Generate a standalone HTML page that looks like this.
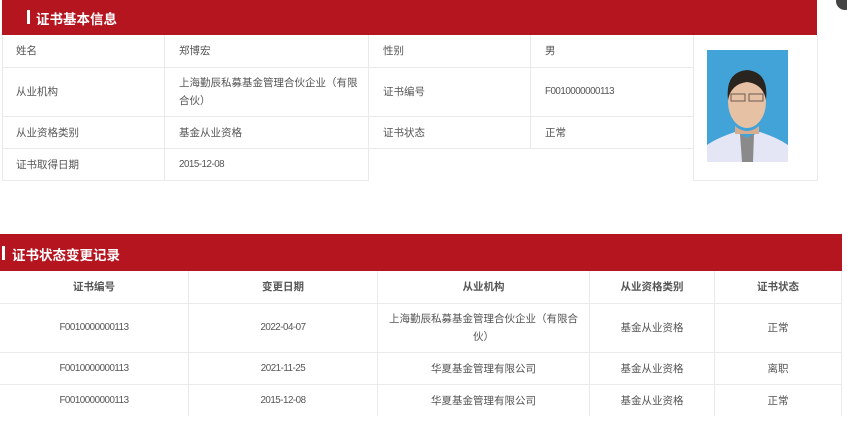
<!DOCTYPE html>
<html><head><meta charset="utf-8"><style>
body{margin:0;width:847px;height:428px;overflow:hidden;background:#fff;font-family:"Liberation Sans","Noto Sans CJK SC",sans-serif;font-size:10.5px;color:#555;position:relative}
.hd{position:absolute;background:#b5151f;color:#fff;font-weight:bold;font-size:13.5px}
.hd .bar{position:absolute;width:3px;height:14px;background:#fff}
.c{position:absolute;border-right:1px solid #eaeaea;border-bottom:1px solid #eaeaea;box-sizing:border-box;display:flex;align-items:center;line-height:18px}
.l{padding-left:13px}
.t{justify-content:center;text-align:center}
.n{letter-spacing:-0.5px;font-size:9.8px}
</style></head><body>
<div class="hd" style="left:2px;top:0;width:815px;height:35px"><div class="bar" style="left:25px;top:10px"></div><div style="position:absolute;left:34px;top:8px">证书基本信息</div></div>
<div style="position:absolute;left:2px;top:35px;width:367px;height:146px;border-left:1px solid #eaeaea;border-bottom:1px solid #eaeaea;box-sizing:border-box"></div>
<div class="c l" style="left:2px;top:35px;width:163px;height:33px;border-left:1px solid #eaeaea">姓名</div>
<div class="c l" style="left:165px;top:35px;width:204px;height:33px;padding-left:14px">郑博宏</div>
<div class="c l" style="left:369px;top:35px;width:162px;height:33px;padding-left:14px">性别</div>
<div class="c l" style="left:531px;top:35px;width:163px;height:33px;padding-left:14px">男</div>
<div class="c l" style="left:2px;top:68px;width:163px;height:49px;border-left:1px solid #eaeaea">从业机构</div>
<div class="c l" style="left:165px;top:68px;width:204px;height:49px;padding-left:14px;padding-right:2px">上海勤辰私募基金管理合伙企业（有限合伙）</div>
<div class="c l" style="left:369px;top:68px;width:162px;height:49px;padding-left:14px">证书编号</div>
<div class="c l n" style="left:531px;top:68px;width:163px;height:49px;padding-left:14px">F0010000000113</div>
<div class="c l" style="left:2px;top:117px;width:163px;height:32px;border-left:1px solid #eaeaea">从业资格类别</div>
<div class="c l" style="left:165px;top:117px;width:204px;height:32px;padding-left:14px">基金从业资格</div>
<div class="c l" style="left:369px;top:117px;width:162px;height:32px;padding-left:14px">证书状态</div>
<div class="c l" style="left:531px;top:117px;width:163px;height:32px;padding-left:14px">正常</div>
<div class="c l" style="left:2px;top:149px;width:163px;height:32px;border-left:1px solid #eaeaea">证书取得日期</div>
<div class="c l n" style="left:165px;top:149px;width:204px;height:32px;padding-left:14px">2015-12-08</div>
<div style="position:absolute;left:693px;top:35px;width:125px;height:146px;border:1px solid #eaeaea;border-top:none;box-sizing:border-box"></div>
<svg style="position:absolute;left:707px;top:50px" width="81" height="112" viewBox="0 0 81 112">
<rect width="81" height="112" fill="#41a3d8"/>
<path d="M0 112 L0 95 Q10 88 28 82 L40 88 L53 82 Q71 88 81 95 L81 112Z" fill="#e4e6f6"/>
<path d="M33 84 L40 88 L47 84 L46 112 L35 112Z" fill="#8a8a8a"/>
<ellipse cx="40" cy="52" rx="19" ry="26" fill="#e7c1a4"/>
<path d="M21 50 Q18 22 40 20 Q62 22 59 50 Q56 34 40 32 Q24 34 21 50Z" fill="#2a241f"/>
<path d="M28 76 Q40 86 52 76 L52 84 L28 84Z" fill="#d7ad90"/>
<rect x="24" y="44" width="14" height="7" fill="none" stroke="#6a5a50" stroke-width="1"/><rect x="42" y="44" width="14" height="7" fill="none" stroke="#6a5a50" stroke-width="1"/>
</svg>
<div style="position:absolute;left:836px;top:-8px;width:18px;height:18px;border-radius:50%;background:#444"></div>
<div class="hd" style="left:0;top:234px;width:842px;height:37px"><div class="bar" style="left:2px;top:12px"></div><div style="position:absolute;left:12px;top:10px">证书状态变更记录</div></div>
<div class="c t" style="left:0;top:271px;width:189px;height:33px;font-weight:bold">证书编号</div>
<div class="c t" style="left:189px;top:271px;width:189px;height:33px;font-weight:bold">变更日期</div>
<div class="c t" style="left:378px;top:271px;width:212px;height:33px;font-weight:bold">从业机构</div>
<div class="c t" style="left:590px;top:271px;width:125px;height:33px;font-weight:bold">从业资格类别</div>
<div class="c t" style="left:715px;top:271px;width:127px;height:33px;font-weight:bold">证书状态</div>
<div class="c t n" style="left:0;top:304px;width:189px;height:49px">F0010000000113</div>
<div class="c t n" style="left:189px;top:304px;width:189px;height:49px">2022-04-07</div>
<div class="c t" style="left:378px;top:304px;width:212px;height:49px;padding:0 8px">上海勤辰私募基金管理合伙企业（有限合伙）</div>
<div class="c t" style="left:590px;top:304px;width:125px;height:49px">基金从业资格</div>
<div class="c t" style="left:715px;top:304px;width:127px;height:49px">正常</div>
<div class="c t n" style="left:0;top:353px;width:189px;height:32px">F0010000000113</div>
<div class="c t n" style="left:189px;top:353px;width:189px;height:32px">2021-11-25</div>
<div class="c t" style="left:378px;top:353px;width:212px;height:32px">华夏基金管理有限公司</div>
<div class="c t" style="left:590px;top:353px;width:125px;height:32px">基金从业资格</div>
<div class="c t" style="left:715px;top:353px;width:127px;height:32px">离职</div>
<div class="c t n" style="left:0;top:385px;width:189px;height:31px;border-bottom:none">F0010000000113</div>
<div class="c t n" style="left:189px;top:385px;width:189px;height:31px;border-bottom:none">2015-12-08</div>
<div class="c t" style="left:378px;top:385px;width:212px;height:31px;border-bottom:none">华夏基金管理有限公司</div>
<div class="c t" style="left:590px;top:385px;width:125px;height:31px;border-bottom:none">基金从业资格</div>
<div class="c t" style="left:715px;top:385px;width:127px;height:31px;border-bottom:none">正常</div>
</body></html>
